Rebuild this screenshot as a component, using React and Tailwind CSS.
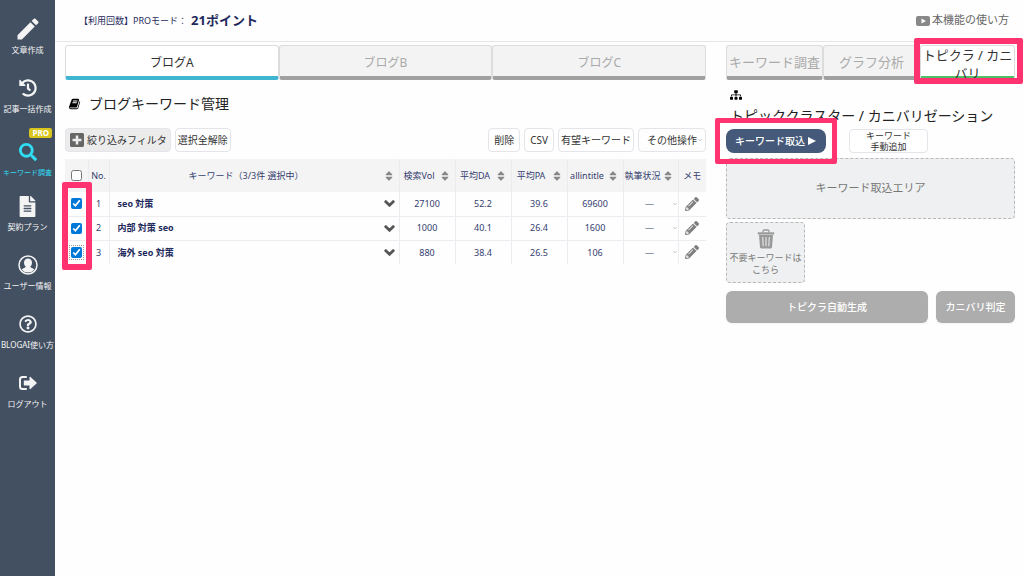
import React from "react";
import clsx from "clsx";
import {
  FaChevronDown,
  FaFileAlt,
  FaHistory,
  FaPencilAlt,
  FaPlusSquare,
  FaRegQuestionCircle,
  FaSearch,
  FaSitemap,
  FaSort,
} from "react-icons/fa";
import { FiChevronDown } from "react-icons/fi";
import { MdEdit } from "react-icons/md";

function UserIcon({ className }) {
  return (
    <svg viewBox="0 0 20 20" className={className} aria-hidden="true">
      <circle cx="10" cy="10" r="9" fill="none" stroke="currentColor" strokeWidth="1.5" />
      <path
        fill="currentColor"
        d="M10 3.6c2.500 0 4 1.800 4 4.200 0 1.700-.7 3.200-1.800 4 .4.800 1.800 1.200 3.200 2 .5.300.8.700.5 1.100A7.600 7.600 0 0 1 10 17.600a7.600 7.600 0 0 1-5.900-2.700c-.3-.4 0-.8.500-1.100 1.400-.8 2.800-1.200 3.200-2-1.100-.8-1.800-2.300-1.800-4C6 5.400 7.500 3.600 10 3.600z"
      />
    </svg>
  );
}

function LogoutIcon({ className }) {
  return (
    <svg viewBox="0 0 20 20" className={className} aria-hidden="true">
      <path
        d="M8 4H4.500A2.500 2.500 0 0 0 2 6.500v7A2.500 2.500 0 0 0 4.500 16H8"
        fill="none"
        stroke="currentColor"
        strokeWidth="2"
        strokeLinecap="round"
      />
      <path fill="currentColor" d="M6.500 7.500h5V4.400c0-.7.6-.9 1-.5l6 5.500c.4.400.4.800 0 1.200l-6 5.500c-.4.400-1 .2-1-.5v-3.100h-5a.7.7 0 0 1-.7-.7V8.200c0-.4.300-.7.700-.7z" />
    </svg>
  );
}

function BookIcon({ className }) {
  return (
    <svg viewBox="0 0 1792 1792" fill="currentColor" className={className} aria-hidden="true">
      <path d="M1639 478q40 57 18 129l-275 906q-19 64-76.500 107.500t-122.500 43.500h-923q-77 0-148.500-53.500t-99.500-131.500q-24-67-2-127 0-4 3-27t4-37q1-8-3-21.500t-3-19.500q2-11 8-21t16.500-23.500 16.500-23.500q23-38 45-91.500t30-91.500q3-10 .5-30t-.5-28q3-11 17-28t17-23q21-36 42-92t25-90q1-9-2.500-32t.5-28q4-13 22-30.500t22-22.500q19-26 42.500-84.500t27.500-96.500q1-8-3-25.500t-2-26.500q2-8 9-18t18-23 17-21q8-12 16.500-30.500t15-35 16-36 19.500-32 26.500-23.500 36-11.500 47.500 5.500l-1 3q38-9 51-9h761q74 0 114 56t18 130l-274 906q-36 119-71.500 153.500t-128.500 34.500h-869q-27 0-38 15-11 16-1 43 24 70 144 70h923q29 0 56-15.500t35-41.500l300-987q7-22 5-57 38 15 59 43zm-1064 2q-4 13 2 22.500t20 9.500h608q13 0 25.500-9.500t16.500-22.500l21-64q4-13-2-22.500t-20-9.500h-608q-13 0-25.500 9.500t-16.500 22.500zm-83 256q-4 13 2 22.500t20 9.500h608q13 0 25.500-9.500t16.500-22.500l21-64q4-13-2-22.500t-20-9.500h-608q-13 0-25.500 9.500t-16.500 22.500z" />
    </svg>
  );
}

function TrashIcon({ className }) {
  return (
    <svg viewBox="0 0 18 20" className={className} aria-hidden="true">
      <path d="M6 3.500V2.200C6 1.500 6.500 1 7.200 1h3.600c.7 0 1.200.5 1.200 1.200v1.300" fill="none" stroke="currentColor" strokeWidth="1.300" />
      <path d="M.8 3.300h16.400v2.200H.8z" fill="currentColor" />
      <path
        fillRule="evenodd"
        fill="currentColor"
        d="M2 6h14l-1 12.300c-.1.700-.6 1.200-1.300 1.200H4.300c-.7 0-1.200-.5-1.300-1.200zm3.200 2 .5 9.200h1L6.200 8zm3.300 0v9.200h1V8zm3.300 0-.5 9.200h1l.5-9.200z"
      />
    </svg>
  );
}

function PlayIcon({ className }) {
  return (
    <svg viewBox="0 0 14 12" className={className} aria-hidden="true">
      <rect y="1" width="14" height="10" rx="2" fill="currentColor" />
      <path d="M5.500 3.500v5L10 6z" fill="#fff" />
    </svg>
  );
}

const NAV = [
  { label: "文章作成", icon: MdEdit, size: "size-7" },
  { label: "記事一括作成", icon: FaHistory, size: "size-[18px]" },
  { label: "キーワード調査", icon: FaSearch, size: "size-[18px]", active: true },
  { label: "契約プラン", icon: FaFileAlt, size: "size-[21px]" },
  { label: "ユーザー情報", icon: UserIcon, size: "size-5" },
  { label: "BLOGAI使い方", icon: FaRegQuestionCircle, size: "size-[18px]" },
  { label: "ログアウト", icon: LogoutIcon, size: "size-5" },
];

const ROWS = [
  { keyword: "seo 対策", vol: "27100", da: "52.2", pa: "39.6", all: "69600" },
  { keyword: "内部 対策 seo", vol: "1000", da: "40.1", pa: "26.4", all: "1600" },
  { keyword: "海外 seo 対策", vol: "880", da: "38.4", pa: "26.5", all: "106" },
];

const COLUMNS = ["検索Vol", "平均DA", "平均PA", "allintitle", "執筆状況"];

function Highlight({ className }) {
  return (
    <span
      aria-hidden="true"
      className={clsx("pointer-events-none absolute z-10 rounded-xs border-[#ff336f]", className)}
    />
  );
}

function Sidebar() {
  return (
    <nav className="w-[55px] shrink-0 bg-[#435062] pt-[7px] text-[#f4f4f4]">
      <ul>
        {NAV.map(({ label, icon: Icon, size, active }) => (
          <li key={label}>
            <a
              href="#"
              className={clsx(
                "flex h-[59px] flex-col items-center whitespace-nowrap",
                active ? "pt-[3px] text-[#2fdcf2]" : "pt-[10px]"
              )}
            >
              {active && (
                <span className="mr-[3px] mb-0.5 h-[10px] self-end rounded-xs bg-[#d9c51c] px-[3px] text-[8px] leading-[10px] font-bold text-white">
                  PRO
                </span>
              )}
              <span className="flex h-6 shrink-0 items-center">
                <Icon className={size} />
              </span>
              <span className={clsx("mt-[3px] leading-3", active ? "text-[7px]" : "text-[8px]")}>
                {label}
              </span>
            </a>
          </li>
        ))}
      </ul>
    </nav>
  );
}

function Tab({ children, active, accent, className }) {
  return (
    <button
      type="button"
      className={clsx(
        "h-[35px] min-w-0 flex-1 rounded-[3px] border border-b-4 border-[#dcdcdc]",
        active ? clsx("bg-white text-[#333]", accent) : "border-b-[#a0a0a0] bg-[#f3f3f3] text-[#aaa]",
        className
      )}
    >
      {children}
    </button>
  );
}

function ToolButton({ children, className }) {
  return (
    <button
      type="button"
      className={clsx(
        "flex h-6 items-center justify-center rounded border border-[#e4e4ea] text-[10px] whitespace-nowrap text-[#333]",
        className
      )}
    >
      {children}
    </button>
  );
}

function KeywordTable() {
  return (
    <div className="relative mt-[7px]">
      <table className="w-full table-fixed text-[9px] text-[#34406f]">
        <colgroup>
          <col className="w-[23px]" />
          <col className="w-[21px]" />
          <col />
          <col className="w-14" />
          <col className="w-14" />
          <col className="w-14" />
          <col className="w-14" />
          <col className="w-[55px]" />
          <col className="w-7" />
        </colgroup>
        <thead>
          <tr className="h-[33px] bg-[#f4f4f5] whitespace-nowrap *:border-r *:border-[#ebebef] *:p-0 *:font-normal *:last:border-r-0">
            <th>
              <input type="checkbox" aria-label="すべて選択" className="mx-auto block size-[11px]" />
            </th>
            <th>No.</th>
            <th>
              <div className="flex items-center pr-1">
                <span className="flex-1">キーワード（3/3件 選択中）</span>
                <FaSort className="size-3 text-[#888]" />
              </div>
            </th>
            {COLUMNS.map((name) => (
              <th key={name}>
                <div className="flex items-center justify-between pr-1">
                  <span className="flex-1">{name}</span>
                  <FaSort className="size-3 shrink-0 text-[#888]" />
                </div>
              </th>
            ))}
            <th>メモ</th>
          </tr>
        </thead>
        <tbody>
          {ROWS.map((row, i) => (
            <tr
              key={row.keyword}
              className="h-6 border-b border-[#ededf1] text-center *:border-r *:border-[#ededf1] *:p-0 *:last:border-r-0 last:border-b-0"
            >
              <td>
                <input
                  type="checkbox"
                  defaultChecked
                  aria-label={row.keyword}
                  className={clsx(
                    "mx-auto block size-[11px] accent-[#0078d7]",
                    i === 2 && "outline outline-offset-1 outline-dotted outline-[#999]"
                  )}
                />
              </td>
              <td>{i + 1}</td>
              <td>
                <div className="flex items-center justify-between pr-1 pl-2 font-bold text-[#1f2a5c]">
                  {row.keyword}
                  <FaChevronDown className="size-[11px] stroke-[#555] stroke-[50px] text-[#555]" />
                </div>
              </td>
              <td>{row.vol}</td>
              <td>{row.da}</td>
              <td>{row.pa}</td>
              <td>{row.all}</td>
              <td>
                <div className="flex items-center">
                  <select aria-label="執筆状況" className="min-w-0 flex-1 appearance-none pl-1 text-center">
                    <option>—</option>
                  </select>
                  <FiChevronDown className="size-[6px] text-[#888]" />
                </div>
              </td>
              <td>
                <button type="button" aria-label="メモを編集" className="mx-auto block">
                  <FaPencilAlt className="size-[14px] text-[#808080]" />
                </button>
              </td>
            </tr>
          ))}
        </tbody>
      </table>
      <Highlight className="top-[23px] -left-[3px] h-[88px] w-[30px] border-[6px]" />
    </div>
  );
}

function KeywordPanel() {
  return (
    <section>
      <div className="flex text-[12px]">
        <Tab active accent="border-b-[#40b5d2]" className="pt-[3px]">
          ブログA
        </Tab>
        <Tab className="pt-[3px]">ブログB</Tab>
        <Tab className="pt-[3px]">ブログC</Tab>
      </div>
      <h1 className="mt-[14px] flex items-center gap-2 pl-1 text-[14px] leading-5 text-[#222]">
        <BookIcon className="size-3 text-black" />
        ブログキーワード管理
      </h1>
      <div className="mt-[14px] flex gap-1">
        <ToolButton className="gap-0.5 bg-[#ececec] px-[3px]">
          <FaPlusSquare className="size-4 text-[#666]" />
          絞り込みフィルタ
        </ToolButton>
        <ToolButton className="bg-white px-0.5">選択全解除</ToolButton>
        <ToolButton className="ml-auto bg-white px-[5px]">削除</ToolButton>
        <ToolButton className="bg-white px-[5px]">CSV</ToolButton>
        <ToolButton className="bg-white px-0.5">有望キーワード</ToolButton>
        <div className="flex h-6 items-center rounded border border-[#e4e4ea] pr-0.5 pl-2 text-[10px] text-[#333]">
          <select aria-label="その他操作" className="appearance-none">
            <option>その他操作</option>
          </select>
          <FiChevronDown className="size-[6px] text-[#888]" />
        </div>
      </div>
      <KeywordTable />
    </section>
  );
}

function TopicPanel() {
  return (
    <section>
      <div className="flex text-[13px]">
        <Tab className="pt-[3px]">
          <span className="whitespace-nowrap">キーワード調査</span>
        </Tab>
        <Tab className="pt-[3px]">グラフ分析</Tab>
        <div className="relative flex min-w-0 flex-1">
          <Tab active accent="border-b-[#4fbf67]" className="leading-[18px]">
            トピクラ / カニバリ
          </Tab>
          <Highlight className="-top-[7px] -right-2 -bottom-1 -left-[6px] border-[6px]" />
        </div>
      </div>
      <div className="mt-[9px] pl-1 text-black">
        <FaSitemap className="size-3" />
        <h2 className="mt-[5px] text-[14px] leading-5 whitespace-nowrap text-[#222]">
          トピッククラスター / カニバリゼーション
        </h2>
      </div>
      <div className="mt-[3px] grid grid-cols-[1fr_79px] gap-x-2">
        <div className="flex items-center justify-between">
          <div className="relative">
            <button
              type="button"
              className="flex h-6 items-center gap-0.5 rounded-lg bg-[#455a7a] px-[9px] text-[10px] font-medium whitespace-nowrap text-white"
            >
              キーワード取込
              <svg viewBox="0 0 10 10" className="size-[10px]" fill="currentColor" aria-hidden="true">
                <path d="M1 1v8l8-4z" />
              </svg>
            </button>
            <Highlight className="-inset-[11px] border-[5px]" />
          </div>
          <button
            type="button"
            className="h-6 w-[79px] rounded border border-[#e4e4ea] bg-white text-[9px] leading-[11px] text-[#333]"
          >
            キーワード
            <br />
            手動追加
          </button>
        </div>
        <div className="col-span-2 mt-[5px] flex h-[61px] items-center justify-center rounded border border-dashed border-[#b8b8b8] bg-[#eff0f1] text-[11px] text-[#777]">
          キーワード取込エリア
        </div>
        <div className="col-span-2 mt-[3px] flex h-[61px] w-[79px] flex-col items-center rounded border border-dashed border-[#b8b8b8] bg-[#eff0f1] pt-[6px] text-center text-[9px] leading-3 text-[#777]">
          <TrashIcon className="mb-[3px] h-5 w-[18px] text-[#999]" />
          不要キーワードは
          <br />
          こちら
        </div>
        <button type="button" className="mt-2 h-8 rounded-md bg-[#adadad] text-[10px] font-medium text-white shadow-xs">
          トピクラ自動生成
        </button>
        <button type="button" className="mt-2 h-8 rounded-md bg-[#adadad] text-[10px] font-medium text-white shadow-xs">
          カニバリ判定
        </button>
      </div>
    </section>
  );
}

export default function App() {
  return (
    <div className="flex min-h-screen bg-[#fefefe] font-['Noto_Sans','Noto_Sans_CJK_JP',sans-serif]">
      <Sidebar />
      <div className="min-w-0 flex-1">
        <header className="flex h-[42px] items-center justify-between border-b border-[#e6e6e6] pr-[15px] pl-6">
          <p className="flex items-center gap-1 text-[9px] text-[#1f2a5c]">
            【利用回数】PROモード：
            <strong className="text-[13px]">21ポイント</strong>
          </p>
          <a href="#" className="flex items-center gap-0.5 text-[11px] text-[#666]">
            <PlayIcon className="h-3 w-[14px] text-[#888]" />
            本機能の使い方
          </a>
        </header>
        <main className="grid grid-cols-[641fr_289fr] gap-5 pt-[3px] pr-[9px] pl-[10px]">
          <KeywordPanel />
          <TopicPanel />
        </main>
      </div>
    </div>
  );
}
